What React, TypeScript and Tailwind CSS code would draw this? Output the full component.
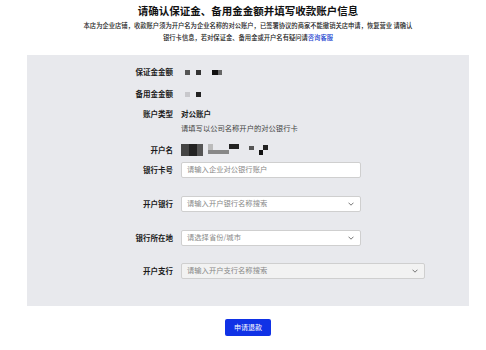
import { clsx } from 'clsx'

const font = { fontFamily: '"Noto Sans CJK SC", "Noto Sans", sans-serif' }

function Chevron() {
    return (
        <svg width="6" height="4" viewBox="0 0 6 4" className="shrink-0">
            <polyline points="0.5,0.7 3,3.2 5.5,0.7" fill="none" stroke="#666" strokeWidth="0.9" />
        </svg>
    )
}

function Label({ children }: { children: React.ReactNode }) {
    return <div className="w-[146px] shrink-0 text-right text-[7.5px] font-bold leading-[12px] text-[#1a1a1a]">{children}</div>
}

function Block({ w, c }: { w: number; c: string }) {
    return <div className={clsx('h-[5px] shrink-0', c)} style={{ width: w }} />
}

function Field({ placeholder, select, wide, disabled }: { placeholder: string; select?: boolean; wide?: boolean; disabled?: boolean }) {
    return (
        <div
            className={clsx(
                'flex h-[16px] items-center justify-between rounded-[2px] border border-[#cfcfcf] pl-[5px] pr-[6px]',
                wide ? 'w-[244px]' : 'w-[180px]',
                disabled ? 'bg-[#f2f2f2]' : 'bg-white'
            )}
        >
            <span className="text-[7.3px] leading-none text-[#888]">{placeholder}</span>
            {select && <Chevron />}
        </div>
    )
}

export default function App() {
    return (
        <div className="min-h-[350px] w-[486px] bg-white" style={font}>
            <div className="ml-[27px] w-[442px]">
                {/* Header */}
                <div className="pt-[4px] text-center">
                    <h1 className="text-[10.5px] font-bold leading-[14px] text-[#111]">请确认保证金、备用金金额并填写收款账户信息</h1>
                    <p className="mt-[2px] whitespace-nowrap text-[6.3px] font-medium leading-[12px] text-[#222]">
                        本店为企业店铺，收款账户须为开户名为企业名称的对公账户，已签署协议的商家不能撤销关店申请，恢复营业 请确认
                        <br />
                        银行卡信息，若对保证金、备用金或开户名有疑问请<span className="text-[#1a3fcf]">咨询客服</span>
                    </p>
                </div>

                {/* Form panel */}
                <div className="mt-[11px] flex h-[251px] flex-col bg-[#e8e9ed] pt-[11px]">
                    <div className="flex items-center gap-[8px]">
                        <Label>保证金金额</Label>
                        <div className="flex items-center gap-[6px] pl-[4px]">
                            <Block w={5} c="bg-[#555]" />
                            <Block w={5} c="bg-[#333]" />
                            <div className="flex pl-[5px]">
                                <Block w={6} c="bg-[#111]" />
                                <Block w={4} c="bg-[#666]" />
                            </div>
                        </div>
                    </div>

                    <div className="mt-[10px] flex items-center gap-[8px]">
                        <Label>备用金金额</Label>
                        <div className="flex items-center gap-[6px] pl-[4px]">
                            <Block w={5} c="bg-[#c8c8cc]" />
                            <Block w={5} c="bg-[#222]" />
                        </div>
                    </div>

                    <div className="mt-[8px] flex items-start gap-[8px]">
                        <Label>账户类型</Label>
                        <div className="flex flex-col gap-[2px]">
                            <span className="text-[7.5px] font-bold leading-[12px] text-[#1a1a1a]">对公账户</span>
                            <span className="text-[7.3px] leading-[12px] text-[#444]">请填写以公司名称开户的对公银行卡</span>
                        </div>
                    </div>

                    <div className="mt-[10px] flex items-center gap-[8px]">
                        <Label>开户名</Label>
                        <div className="flex h-[12px] items-start">
                            <div className="h-[12px] w-[8px] bg-[#444]" />
                            <div className="h-[12px] w-[8px] bg-[#222]" />
                            <div className="h-[12px] w-[6px] bg-[#555]" />
                            <div className="ml-[5px] flex h-[12px] w-[21px] flex-col">
                                <div className="h-[6px] w-[5px] bg-[#bbb]" />
                                <div className="h-[4px] w-[21px] bg-[#888]" />
                            </div>
                            <div className="h-[5px] w-[10px] bg-[#222]" />
                            <div className="ml-[10px] mt-[2px] h-[4px] w-[5px] bg-[#555]" />
                            <div className="ml-[5px] mt-[6px] h-[5px] w-[4px] bg-[#111]" />
                            <div className="mt-[1px] h-[5px] w-[5px] bg-[#222]" />
                        </div>
                    </div>

                    <div className="mt-[6px] flex items-center gap-[8px]">
                        <Label>银行卡号</Label>
                        <Field placeholder="请输入企业对公银行账户" />
                    </div>

                    <div className="mt-[18px] flex items-center gap-[8px]">
                        <Label>开户银行</Label>
                        <Field placeholder="请输入开户银行名称搜索" select />
                    </div>

                    <div className="mt-[18px] flex items-center gap-[8px]">
                        <Label>银行所在地</Label>
                        <Field placeholder="请选择省份/城市" select />
                    </div>

                    <div className="mt-[17px] flex items-center gap-[8px]">
                        <Label>开户支行</Label>
                        <Field placeholder="请输入开户支行名称搜索" select wide disabled />
                    </div>
                </div>

                <div className="mt-[13px] flex justify-center">
                    <button className="h-[17px] w-[46px] rounded-[2px] bg-[#1032e6] text-[7px] leading-none text-white">申请退款</button>
                </div>
            </div>
        </div>
    )
}
